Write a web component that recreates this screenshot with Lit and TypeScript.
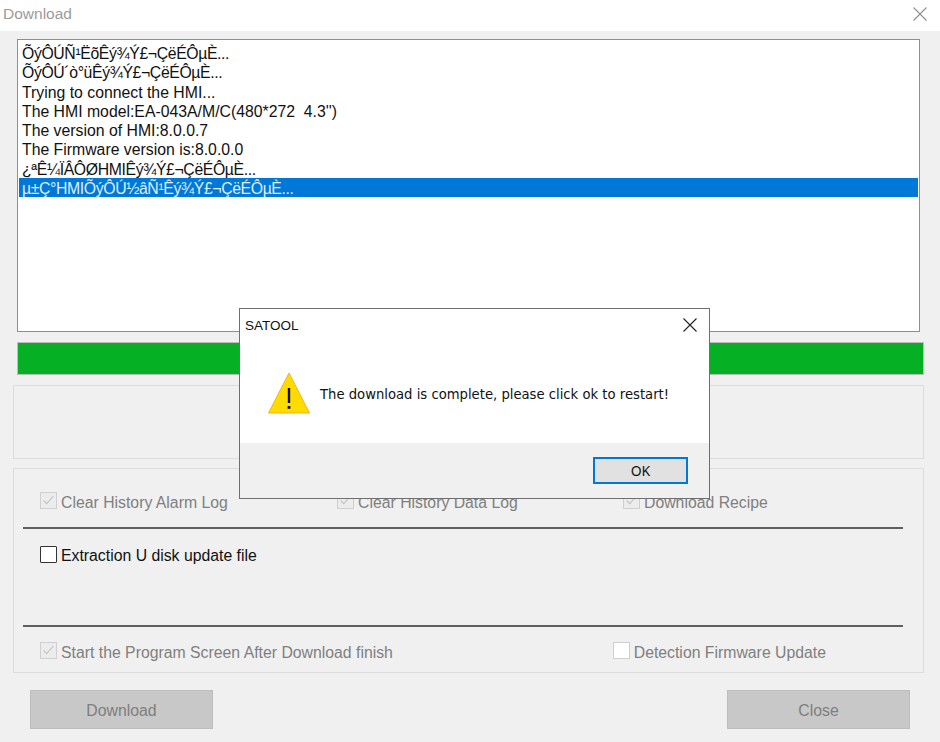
import { LitElement, html, css, svg } from "lit";
import { customElement } from "lit/decorators.js";

const LOG = [
  { text: "ÕýÔÚÑ¹ËõÊý¾Ý£¬ÇëÉÔµÈ...", garbled: true },
  { text: "ÕýÔÚ´ò°üÊý¾Ý£¬ÇëÉÔµÈ...", garbled: true },
  { text: "Trying to connect the HMI...", garbled: false },
  { text: "The HMI model:EA-043A/M/C(480*272  4.3'')", garbled: false },
  { text: "The version of HMI:8.0.0.7", garbled: false },
  { text: "The Firmware version is:8.0.0.0", garbled: false },
  { text: "¿ªÊ¼ÏÂÔØHMIÊý¾Ý£¬ÇëÉÔµÈ...", garbled: true },
  { text: "µ±Ç°HMIÕýÔÚ½âÑ¹Êý¾Ý£¬ÇëÉÔµÈ...", garbled: true },
];

const closeIcon = (cls: string) => html`<svg class=${cls} viewBox="0 0 14 14" fill="none" stroke="currentColor" stroke-width="1.1">
  ${svg`<path d="M0.5 0.5 L13.5 13.5 M13.5 0.5 L0.5 13.5"></path>`}
</svg>`;

const box = (checked: boolean, state: string) => html`<span class="box ${state}">
  ${checked
    ? html`<svg viewBox="0 0 17 17" fill="none" stroke="#c4c4c4" stroke-width="1.3">${svg`<path d="M3 8.5 L6.5 12 L14 3.5"></path>`}</svg>`
    : ""}
</span>`;

@customElement("app-root")
export class AppRoot extends LitElement {
  static styles = css`
    :host {
      display: block;
      position: relative;
      width: 940px;
      height: 742px;
      overflow: hidden;
      background: #f0f0f0;
      font-family: "Liberation Sans", Arial, sans-serif;
      font-size: 15.8px;
      color: #111;
    }
    .titlebar {
      height: 31px;
      background: #fff;
      display: flex;
      align-items: center;
      justify-content: space-between;
      padding: 0 13px 3px 3px;
      box-sizing: border-box;
      color: #9b9b9b;
      font-size: 15.5px;
    }
    .x-main { width: 14px; height: 14px; color: #8f8f8f; }
    .main {
      padding: 8px 16px 0 13px;
      display: flex;
      flex-direction: column;
      align-items: flex-start;
    }
    .log {
      width: 903px;
      height: 293px;
      margin-left: 4px;
      box-sizing: border-box;
      border: 1px solid #8a9099;
      background: #fff;
      padding: 3px 1px;
      color: #111;
    }
    .line {
      height: 19.3px;
      line-height: 21px;
      padding-left: 3px;
      white-space: pre;
    }
    .line.garbled { letter-spacing: -0.38px; }
    .line.sel {
      background: #0078d7;
      color: #dfeeff;
    }
    .progress {
      width: 907px;
      height: 33px;
      margin: 10px 0 0 4px;
      box-sizing: border-box;
      background: #06b025;
      border: 1px solid #bcbcbc;
    }
    .group {
      width: 911px;
      box-sizing: border-box;
      border: 1px solid #dcdcdc;
    }
    .g1 { height: 74px; margin-top: 10px; }
    .g2 {
      height: 205px;
      margin-top: 9px;
      padding: 0 20px 0 9px;
      display: flex;
      flex-direction: column;
    }
    .row {
      display: flex;
      align-items: center;
      padding-left: 17px;
    }
    .r1 { height: 58px; padding-top: 6px; box-sizing: border-box; }
    .r1 .lbl { padding-top: 4px; }
    .r2 { height: 52px; align-items: flex-start; padding-top: 16px; box-sizing: border-box; }
    .r2 .lbl { padding-top: 2px; }
    .r2-spacer { height: 45px; }
    .r3 { height: 45px; padding-top: 1px; box-sizing: border-box; }
    .r3 .lbl { padding-top: 6px; }
    .rule { height: 2px; background: #5f5f5f; flex: none; }
    .check {
      display: flex;
      align-items: center;
      gap: 4px;
      color: #7f7f7f;
      white-space: nowrap;
    }
    .check.on { color: #111; }
    .c1 { width: 297px; }
    .c2 { width: 286px; }
    .c3 { margin-left: auto; margin-right: 77px; }
    .box {
      width: 17px;
      height: 17px;
      box-sizing: border-box;
      display: block;
      flex: none;
    }
    .box svg { display: block; width: 15px; height: 15px; }
    .box.dis { border: 1px solid #cfcfcf; background: #ececec; }
    .box.blank { border: 1px solid #cfcfcf; background: #fff; }
    .box.act { border: 1px solid #333; background: #fff; border-radius: 1px; }
    .actions {
      width: 880px;
      margin: 17px 0 0 17px;
      display: flex;
      justify-content: space-between;
    }
    .btn {
      width: 183px;
      height: 39px;
      box-sizing: border-box;
      padding-top: 2px;
      background: #c8c8c8;
      border: 1px solid #bdbdbd;
      color: #7e7e7e;
      display: flex;
      align-items: center;
      justify-content: center;
    }
    .dialog {
      position: absolute;
      left: 239px;
      top: 308px;
      width: 471px;
      height: 191px;
      box-sizing: border-box;
      border: 1px solid #6f6f6f;
      background: #fff;
      display: flex;
      flex-direction: column;
    }
    .d-title {
      height: 32px;
      display: flex;
      align-items: center;
      justify-content: space-between;
      padding: 0 12px 0 5px;
      font-size: 13.5px;
      color: #111;
      flex: none;
    }
    .x-dlg { width: 14px; height: 14px; color: #222; }
    .d-body {
      flex: 1;
      display: flex;
      align-items: center;
      gap: 10px;
      padding: 1px 0 0 28px;
    }
    .warn { width: 42px; height: 42px; flex: none; display: block; }
    .msg {
      font-family: "DejaVu Sans", Verdana, sans-serif;
      font-size: 13.2px;
      color: #111;
      white-space: nowrap;
      padding-top: 3px;
    }
    .d-foot {
      height: 55px;
      flex: none;
      background: #f0f0f0;
      display: flex;
      justify-content: flex-end;
      padding: 14px 21px 0 0;
      box-sizing: border-box;
    }
    .ok {
      width: 95px;
      height: 27px;
      box-sizing: border-box;
      border: 2px solid #0078d7;
      background: #e1e1e1;
      color: #111;
      font-family: "Noto Sans", "Liberation Sans", sans-serif;
      font-size: 14px;
      display: flex;
      align-items: center;
      justify-content: center;
    }
  `;

  render() {
    return html`
      <div class="titlebar"><span>Download</span>${closeIcon("x-main")}</div>
      <div class="main">
        <div class="log">
          ${LOG.map((l, i) => html`<div class="line ${l.garbled ? "garbled" : ""} ${i === LOG.length - 1 ? "sel" : ""}">${l.text}</div>`)}
        </div>
        <div class="progress"></div>
        <div class="group g1"></div>
        <div class="group g2">
          <div class="row r1">
            <label class="check c1">${box(true, "dis")}<span class="lbl">Clear History Alarm Log</span></label>
            <label class="check c2">${box(true, "dis")}<span class="lbl">Clear History Data Log</span></label>
            <label class="check">${box(true, "dis")}<span class="lbl">Download Recipe</span></label>
          </div>
          <div class="rule"></div>
          <div class="row r2">
            <label class="check on">${box(false, "act")}<span class="lbl">Extraction U disk update file</span></label>
          </div>
          <div class="r2-spacer"></div>
          <div class="rule"></div>
          <div class="row r3">
            <label class="check">${box(true, "dis")}<span class="lbl">Start the Program Screen After Download finish</span></label>
            <label class="check c3">${box(false, "blank")}<span class="lbl">Detection Firmware Update</span></label>
          </div>
        </div>
        <div class="actions">
          <div class="btn">Download</div>
          <div class="btn">Close</div>
        </div>
      </div>
      <div class="dialog">
        <div class="d-title"><span>SATOOL</span>${closeIcon("x-dlg")}</div>
        <div class="d-body">
          <svg class="warn" viewBox="0 0 42 42">
            ${svg`<path d="M21 1 L41.5 41 L0.5 41 Z" fill="#ffdc00" stroke="#f5b21c" stroke-width="1" stroke-linejoin="round"></path>
            <rect x="19.8" y="16" width="2.4" height="15" fill="#111"></rect>
            <rect x="19.6" y="34" width="2.8" height="2.8" fill="#111"></rect>`}
          </svg>
          <span class="msg">The download is complete, please click ok to restart!</span>
        </div>
        <div class="d-foot"><div class="ok">OK</div></div>
      </div>
    `;
  }
}
